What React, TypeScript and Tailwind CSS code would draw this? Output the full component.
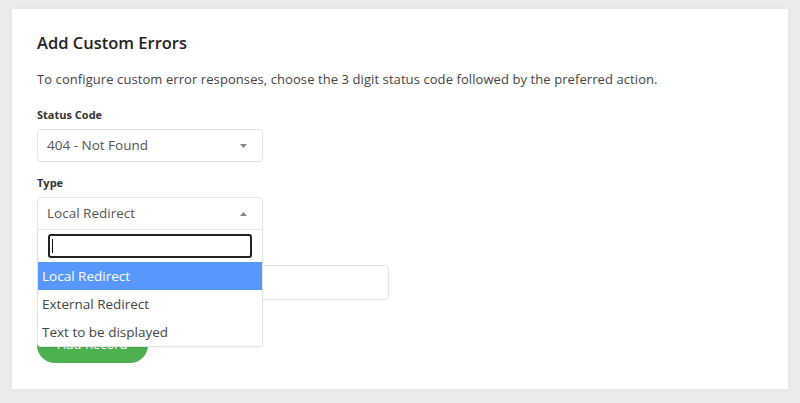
import React from 'react';

const font = { fontFamily: '"Open Sans", "Liberation Sans", sans-serif' };

function Caret({ up }: { up?: boolean }) {
  return (
    <svg width="7" height="4" viewBox="0 0 7 4" className="shrink-0">
      {up ? <path d="M0 4 L3.5 0 L7 4 Z" fill="#888" /> : <path d="M0 0 L7 0 L3.5 4 Z" fill="#888" />}
    </svg>
  );
}

export default function App() {
  const options = ['Local Redirect', 'External Redirect', 'Text to be displayed'];

  return (
    <div className="w-[800px] h-[403px] bg-[#ececec] pt-[9px] px-[12px] overflow-hidden" style={font}>
      <div className="bg-white h-[380px] shadow-[0_0_6px_rgba(0,0,0,0.06)] px-[25px] pt-[22px] flex flex-col items-start">
        {/* Heading */}
        <h2 className="text-[16.5px] leading-[24px] font-semibold text-[#222]">Add Custom Errors</h2>
        <p className="mt-[14px] text-[13px] leading-[20px] tracking-[0.08px] text-[#444]">
          To configure custom error responses, choose the 3 digit status code followed by the preferred action.
        </p>

        {/* Status code */}
        <label className="mt-[18px] text-[11px] leading-[16px] font-bold text-[#333]">Status Code</label>
        <div className="mt-[6px] w-[226px] h-[33px] border border-[#e4e4e4] rounded-[4px] flex items-center justify-between pl-[9px] pr-[15px]">
          <span className="text-[13.5px] text-[#555]">404 - Not Found</span>
          <Caret />
        </div>

        {/* Type */}
        <label className="mt-[13px] text-[11px] leading-[16px] font-bold text-[#333]">Type</label>
        <div className="relative mt-[6px] z-10">
          <div className="w-[226px] h-[33px] border border-[#e4e4e4] rounded-t-[4px] flex items-center justify-between pl-[9px] pr-[15px] bg-white">
            <span className="text-[13.5px] text-[#555]">Local Redirect</span>
            <Caret up />
          </div>
          <div className="absolute left-0 top-full w-[226px] h-[117px] bg-white border border-t-0 border-[#e4e4e4] rounded-b-[4px] shadow-[0_1px_2px_rgba(0,0,0,0.05)]">
            <div className="px-[10px] pt-[4px] pb-[4px]">
              <div className="h-[24px] border-2 border-[#222] rounded-[3px] flex items-center pl-[2px]">
                <span className="w-px h-[14px] bg-[#111]" />
              </div>
            </div>
            {options.map((o, i) => (
              <div
                key={o}
                className={`h-[28px] flex items-center px-[4px] text-[13.5px] ${i === 0 ? 'bg-[#5897fb] text-white' : 'text-[#444]'}`}
              >
                {o}
              </div>
            ))}
          </div>
        </div>

        {/* Hidden behind dropdown */}
        <label className="mt-[13px] text-[11px] leading-[16px] font-bold text-[#333]">Redirect URL</label>
        <div className="mt-[6px] w-[352px] h-[35px] border border-[#e4e4e4] rounded-[4px]" />

        <button className="mt-[27px] w-[111px] h-[36px] rounded-full bg-[#4caf50] text-white text-[13px] font-medium">
          Add Record
        </button>
      </div>
    </div>
  );
}
